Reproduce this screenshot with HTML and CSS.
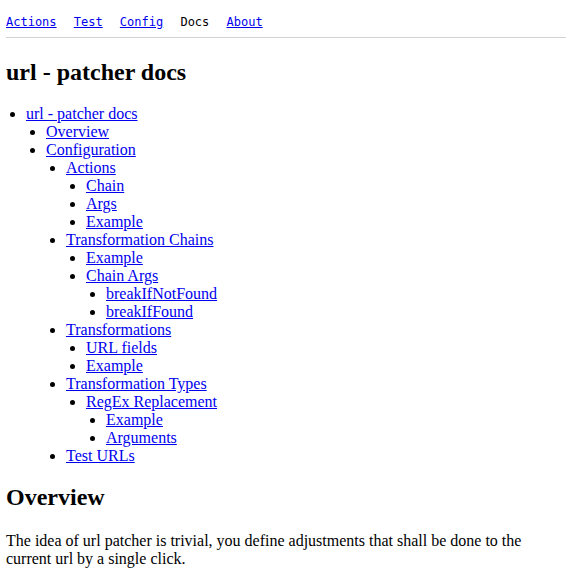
FILE: index.html
```html
<!DOCTYPE html>
<html>
<head>
<meta charset="utf-8">
<link rel="stylesheet" href="styles.css">
</head>
<body>
<nav class="topnav">
  <a href="#">Actions</a>
  <a href="#">Test</a>
  <a href="#">Config</a>
  <span class="current">Docs</span>
  <a href="#">About</a>
</nav>
<main class="doc">
  <h1 class="title">url - patcher docs</h1>
  <ul class="toc">
    <li><a href="#">url - patcher docs</a>
      <ul>
        <li><a href="#">Overview</a></li>
        <li><a href="#">Configuration</a>
          <ul>
            <li><a href="#">Actions</a>
              <ul>
                <li><a href="#">Chain</a></li>
                <li><a href="#">Args</a></li>
                <li><a href="#">Example</a></li>
              </ul>
            </li>
            <li><a href="#">Transformation Chains</a>
              <ul>
                <li><a href="#">Example</a></li>
                <li><a href="#">Chain Args</a>
                  <ul>
                    <li><a href="#">breakIfNotFound</a></li>
                    <li><a href="#">breakIfFound</a></li>
                  </ul>
                </li>
              </ul>
            </li>
            <li><a href="#">Transformations</a>
              <ul>
                <li><a href="#">URL fields</a></li>
                <li><a href="#">Example</a></li>
              </ul>
            </li>
            <li><a href="#">Transformation Types</a>
              <ul>
                <li><a href="#">RegEx Replacement</a>
                  <ul>
                    <li><a href="#">Example</a></li>
                    <li><a href="#">Arguments</a></li>
                  </ul>
                </li>
              </ul>
            </li>
            <li><a href="#">Test URLs</a></li>
          </ul>
        </li>
      </ul>
    </li>
  </ul>
  <h2 class="section">Overview</h2>
  <p class="para">The idea of url patcher is trivial, you define adjustments that shall be done to the current url by a single click.</p>
</main>
</body>
</html>
```

FILE: styles.css
```css
html, body {
  margin: 0;
  padding: 0;
  background: #fff;
}
body {
  padding: 0 5px 0 6px;
  font-family: "Liberation Serif", "Times New Roman", serif;
  font-size: 16px;
  color: #000;
}
a {
  color: #0000ee;
}
.topnav {
  display: flex;
  gap: 17.2px;
  padding: 15px 0 7px;
  border-bottom: 1px solid #d3d3d3;
  font-family: "DejaVu Sans Mono", monospace;
  font-size: 12px;
  line-height: 15px;
}
.topnav .current {
  color: #000;
}
.title {
  font-size: 24px;
  margin: 20px 0 0;
  line-height: 28px;
}
.toc {
  margin: 19px 0 0;
  padding-left: 20px;
  line-height: 18px;
  list-style: disc;
}
.toc ul {
  margin: 0;
  padding-left: 20px;
  list-style: disc;
}
.section {
  font-size: 24px;
  margin: 18px 0 0;
  line-height: 28px;
}
.para {
  margin: 21px 0 0;
  line-height: 18px;
}
```
